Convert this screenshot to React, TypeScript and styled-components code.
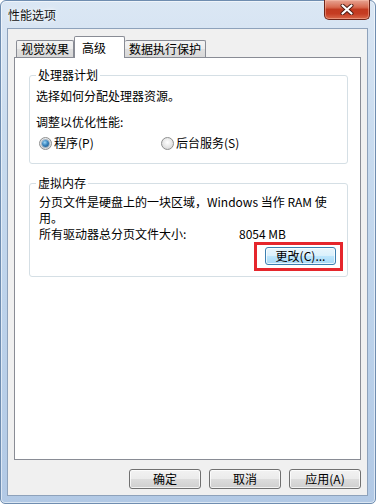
import styled, { createGlobalStyle } from "styled-components";

const Global = createGlobalStyle`
  html, body { margin: 0; padding: 0; background: #ffffff; }
  body {
    font-family: "SimSun", "Noto Sans CJK SC", "Noto Sans", sans-serif;
    font-size: 12px;
    color: #000000;
  }
  * { box-sizing: border-box; }
`;

const Window = styled.div`
  width: 376px;
  height: 504px;
  display: flex;
  flex-direction: column;
  padding: 0 7px 7px 6px;
  border: 1px solid #6f8db0;
  border-radius: 6px 6px 5px 5px;
  background: linear-gradient(180deg, #dbe7f4 0%, #cadcef 25%, #bdd3eb 60%, #b2c9e5 100%);
  box-shadow: inset 0 0 0 1px rgba(255, 255, 255, 0.55);
`;

const TitleBar = styled.div`
  height: 27px;
  display: flex;
  justify-content: space-between;
  align-items: flex-start;
`;

const Title = styled.div`
  margin: 7px 0 0 1px;
  line-height: 14px;
  font-size: 12px;
  color: #111;
  text-shadow: 0 0 6px rgba(255, 255, 255, 0.95), 0 0 3px rgba(255, 255, 255, 0.9);
`;

const CloseButton = styled.div`
  width: 46px;
  height: 20px;
  margin: -1px -2px 0 0;
  display: flex;
  align-items: center;
  justify-content: center;
  border: 1px solid #6e2418;
  border-top: none;
  border-radius: 0 0 5px 5px;
  background: linear-gradient(180deg, #e7a493 0%, #d86a50 38%, #c23a20 50%, #c53c22 72%, #d9684a 100%);
  box-shadow: inset 0 0 0 1px rgba(255, 200, 180, 0.45);
`;

const Client = styled.div`
  flex: 1;
  display: flex;
  flex-direction: column;
  background: #f0f0f0;
  border: 1px solid #8ea2bb;
  padding: 7px 6px 6px 6px;
`;

const TabRow = styled.div`
  height: 22px;
  margin-bottom: -1px;
  padding-left: 2px;
  display: flex;
  align-items: flex-end;
  position: relative;
  z-index: 1;
`;

const Tab = styled.div<{ $active?: boolean; $w: number }>`
  width: ${(p) => p.$w}px;
  height: ${(p) => (p.$active ? 22 : 17)}px;
  margin-bottom: ${(p) => (p.$active ? 0 : 1)}px;
  border: 1px solid #898c95;
  border-bottom: none;
  ${(p) => (p.$active ? "" : "border-left: none;")}
  border-radius: 2px 2px 0 0;
  background: ${(p) =>
    p.$active
      ? "#ffffff"
      : "linear-gradient(180deg, #f4f4f4 0%, #ececec 50%, #dfdfdf 50%, #d8d8d8 100%)"};
  display: flex;
  justify-content: ${(p) => (p.$active ? "flex-start" : "center")};
  padding: ${(p) => (p.$active ? "4px 0 0 7px" : "1px 0 0 0")};
  line-height: 14px;
  &:first-child {
    border-left: 1px solid #898c95;
  }
`;

const Panel = styled.div`
  flex: 1;
  display: flex;
  flex-direction: column;
  gap: 12px;
  background: #ffffff;
  border: 1px solid #898c95;
  padding: 10px 12px 0 14px;
`;

const Group = styled.fieldset<{ $indent: number; $pt: number; $pb: number }>`
  margin: 0;
  min-width: 0;
  display: flex;
  flex-direction: column;
  border: 1px solid #d5dfe5;
  border-radius: 3px;
  padding: ${(p) => p.$pt}px 4px ${(p) => p.$pb}px ${(p) => p.$indent}px;
`;

const Legend = styled.legend<{ $shift: number }>`
  padding: 0 2px;
  margin-left: ${(p) => p.$shift}px;
  line-height: 14px;
`;

const Line = styled.div<{ $mt?: number; $lh?: number }>`
  margin-top: ${(p) => p.$mt ?? 0}px;
  line-height: ${(p) => p.$lh ?? 14}px;
  white-space: nowrap;
`;

const RadioRow = styled.div`
  margin-top: 7px;
  padding-left: 3px;
  height: 14px;
  display: flex;
  align-items: center;
`;

const RadioItem = styled.label<{ $w?: number }>`
  ${(p) => (p.$w ? `width: ${p.$w}px;` : "")}
  display: flex;
  align-items: center;
  gap: 2px;
  line-height: 14px;
`;

const RadioDot = styled.span<{ $checked?: boolean }>`
  width: 13px;
  height: 13px;
  border-radius: 50%;
  border: 1px solid #8e8f8f;
  background: radial-gradient(circle at 50% 40%, #ffffff 0%, #eaeaea 45%, #cfcfcf 100%);
  display: flex;
  align-items: center;
  justify-content: center;
  &::after {
    content: "";
    width: 7px;
    height: 7px;
    border-radius: 50%;
    display: ${(p) => (p.$checked ? "block" : "none")};
    background: radial-gradient(circle at 40% 35%, #9ed7f6 0%, #3b86c0 45%, #144a78 100%);
    box-shadow: 0 0 0 1px rgba(30, 80, 130, 0.35);
  }
`;

const SizeRow = styled.div`
  display: flex;
  line-height: 16px;
`;

const SizeLabel = styled.span`
  width: 200px;
`;

const Highlight = styled.div`
  align-self: flex-end;
  border: 3px solid #e5262c;
  padding: 2px 4px 3px 8px;
`;

const Button = styled.div<{ $default?: boolean; $w: number }>`
  width: ${(p) => p.$w}px;
  height: ${(p) => (p.$default ? 18 : 20)}px;
  display: flex;
  align-items: center;
  justify-content: center;
  line-height: 14px;
  border: 1px solid ${(p) => (p.$default ? "#3c7fb1" : "#707070")};
  border-radius: 3px;
  background: ${(p) =>
    p.$default
      ? "linear-gradient(180deg, #eaf6fd 0%, #d9f0fc 50%, #bee6fd 50%, #a7d9f5 100%)"
      : "linear-gradient(180deg, #f2f2f2 0%, #ebebeb 50%, #dddddd 50%, #cfcfcf 100%)"};
  box-shadow: inset 0 0 0 1px rgba(255, 255, 255, 0.75);
`;

const ButtonRow = styled.div`
  margin-top: 9px;
  display: flex;
  justify-content: flex-end;
  gap: 8px;
`;

function CloseGlyph() {
  return (
    <svg width="14" height="11" viewBox="0 0 14 11">
      <path d="M2.5 1.5 L11.5 9.5 M11.5 1.5 L2.5 9.5" stroke="#4a1a12" strokeWidth="4" strokeLinecap="round" />
      <path d="M2.5 1.5 L11.5 9.5 M11.5 1.5 L2.5 9.5" stroke="#ffffff" strokeWidth="2.2" strokeLinecap="round" />
    </svg>
  );
}

export default function App() {
  return (
    <>
      <Global />
      <Window>
        <TitleBar>
          <Title>性能选项</Title>
          <CloseButton>
            <CloseGlyph />
          </CloseButton>
        </TitleBar>
        <Client>
          <TabRow>
            <Tab $w={58}>视觉效果</Tab>
            <Tab $w={51} $active>高级</Tab>
            <Tab $w={81}>数据执行保护</Tab>
          </TabRow>
          <Panel>
            <Group $indent={6} $pt={6} $pb={13}>
              <Legend $shift={0}>处理器计划</Legend>
              <Line $mt={1}>选择如何分配处理器资源。</Line>
              <Line $mt={12}>调整以优化性能:</Line>
              <RadioRow>
                <RadioItem $w={122}>
                  <RadioDot $checked />
                  程序(P)
                </RadioItem>
                <RadioItem>
                  <RadioDot />
                  后台服务(S)
                </RadioItem>
              </RadioRow>
            </Group>
            <Group $indent={9} $pt={4} $pb={5}>
              <Legend $shift={-3}>虚拟内存</Legend>
              <Line $lh={16}>
                分页文件是硬盘上的一块区域，Windows 当作 RAM 使
                <br />
                用。
              </Line>
              <SizeRow>
                <SizeLabel>所有驱动器总分页文件大小:</SizeLabel>
                <span>8054 MB</span>
              </SizeRow>
              <Highlight>
                <Button $w={71} $default>
                  更改(C)...
                </Button>
              </Highlight>
            </Group>
          </Panel>
          <ButtonRow>
            <Button $w={72}>确定</Button>
            <Button $w={72}>取消</Button>
            <Button $w={72}>应用(A)</Button>
          </ButtonRow>
        </Client>
      </Window>
    </>
  );
}
